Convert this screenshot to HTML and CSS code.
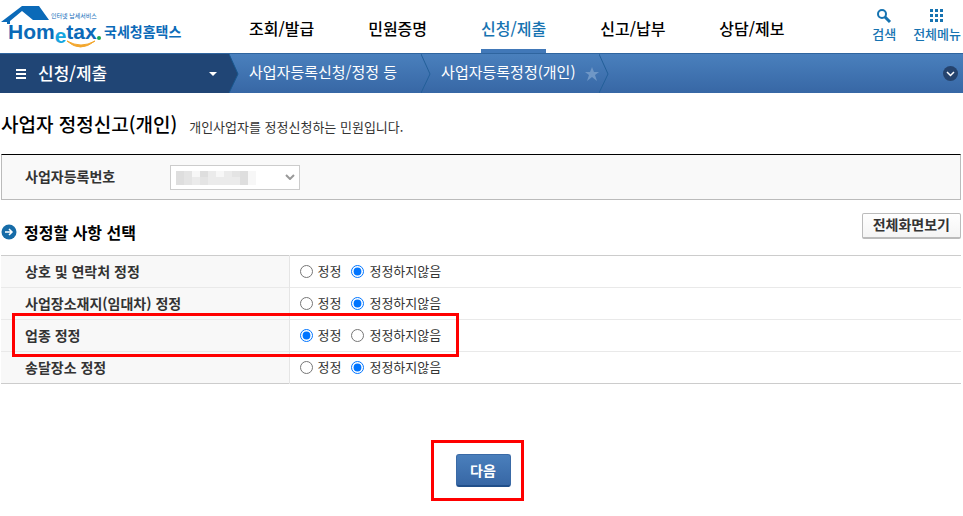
FILE: index.html
```html
<!DOCTYPE html>
<html lang="ko">
<head>
    <meta charset="utf-8">
    <meta name="viewport" content="width=device-width, initial-scale=1">
    <title>국세청홈택스</title>
    <link rel="stylesheet" href="styles.css">
</head>
<body>
    <header class="header">
        <a href="#" class="logo">
            <svg width="182" height="53" viewBox="0 0 182 53" role="img" aria-label="Hometax 국세청홈택스">
                <path d="M1 22L22 6H39L49 20H33L22 11L10 21V24H7V22Z" fill="#0b6ab8"/>
                <text class="logo-sub" x="51" y="18">인터넷 납세서비스</text>
                <text class="logo-name" x="8" y="39">Hom<tspan class="logo-e" dy="4">e</tspan><tspan dy="-4">tax</tspan></text>
                <path d="M67 41Q80 53 95 41Q81 49 67 41Z" fill="#f3a72e" stroke="#f3a72e"/>
                <circle cx="99" cy="38" r="2" fill="#19a551"/>
                <text class="logo-kr" x="104" y="37">국세청홈택스</text>
            </svg>
        </a>
        <nav class="menu">
            <a href="#">조회/발급</a>
            <a href="#">민원증명</a>
            <a href="#" class="active">신청/제출</a>
            <a href="#">신고/납부</a>
            <a href="#">상담/제보</a>
        </nav>
        <div class="tools">
            <a href="#">
                <svg width="16" height="16" viewBox="0 0 16 16"><circle cx="6" cy="6" r="4" fill="none" stroke="#1673b1" stroke-width="2"/><path d="M9 9L14 14" stroke="#1673b1" stroke-width="3"/></svg>
                검색
            </a>
            <a href="#">
                <svg width="16" height="16" viewBox="0 0 16 16" fill="#1673b1"><path d="M1 1h3v3H1zM6 1h3v3H6zM11 1h3v3h-3zM1 6h3v3H1zM6 6h3v3H6zM11 6h3v3h-3zM1 11h3v3H1zM6 11h3v3H6zM11 11h3v3h-3z"/></svg>
                전체메뉴
            </a>
        </div>
    </header>

    <div class="path-bar">
        <button type="button" class="path-main">
            <svg width="10" height="10" viewBox="0 0 10 10" fill="#fff"><path d="M0 0h10v2H0zM0 4h10v2H0zM0 8h10v2H0z"/></svg>
            <span>신청/제출</span>
            <svg width="8" height="4" viewBox="0 0 8 4"><path d="M0 0H8L4 4Z" fill="#fff"/></svg>
        </button>
        <svg width="10" height="39" viewBox="0 0 10 39"><path d="M0 0L9 20L0 39Z" fill="#204575"/><path d="M0 0L9 20L0 39" fill="none" stroke="#19578e"/></svg>
        <a href="#" class="path-sub">사업자등록신청/정정 등</a>
        <svg width="10" height="39" viewBox="0 0 10 39"><path d="M0 0L9 20L0 39" fill="none" stroke="#235f99"/></svg>
        <a href="#" class="path-page">사업자등록정정(개인)</a>
        <svg class="star" width="14" height="14" viewBox="0 0 14 14"><path d="M7 0L9 5L14 5L10 8L12 14L7 10L2 14L4 8L0 5L5 5Z" fill="#6f97c6"/></svg>
        <svg width="10" height="39" viewBox="0 0 10 39"><path d="M0 0L9 20L0 39" fill="none" stroke="#235f99"/></svg>
        <button type="button" class="path-open" aria-label="열기">
            <svg width="15" height="15" viewBox="0 0 15 15"><circle cx="7.500" cy="7.500" r="7.500" fill="#25436d"/><path d="M4 6L7.500 9.500L11 6" fill="none" stroke="#fff" stroke-width="1.500"/></svg>
        </button>
    </div>

    <main class="content">
        <div class="title">
            <h1>사업자 정정신고(개인)</h1>
            <p>개인사업자를 정정신청하는 민원입니다.</p>
        </div>

        <div class="search-box">
            <label for="bizNo">사업자등록번호</label>
            <div class="select-wrap">
                <select id="bizNo"><option></option></select>
                <svg class="masked" width="80" height="14" viewBox="0 0 80 14">
                    <path d="M0 0h80v14H0z" fill="#f7f7f7"/>
                    <path d="M0 0h8v14H0zM24 0h8v6h-8zM64 0h8v14h-8z" fill="#dedede"/>
                    <path d="M8 0h8v14H8zM24 6h8v8h-8zM56 0h8v6h-8z" fill="#e4e4e4"/>
                    <path d="M16 6h8v8h-8zM32 0h8v6h-8zM32 6h32v8H32zM48 0h8v6h-8z" fill="#ebebeb"/>
                </svg>
                <svg class="chevron" width="10" height="6" viewBox="0 0 10 6"><path d="M1 1L5 5L9 1" fill="none" stroke="#999" stroke-width="2"/></svg>
            </div>
        </div>

        <div class="section-head">
            <h2>
                <svg width="16" height="16" viewBox="0 0 16 16"><circle cx="8" cy="8" r="7.500" fill="#176ca8"/><path d="M4 8H11M8 5L11 8L8 11" fill="none" stroke="#fff" stroke-width="1.500"/></svg>
                정정할 사항 선택
            </h2>
            <button type="button" class="btn-view">전체화면보기</button>
        </div>

        <table class="form-table">
            <tr>
                <th scope="row">상호 및 연락처 정정</th>
                <td>
                    <div class="radios">
                        <label><input type="radio" name="name">정정</label>
                        <label><input type="radio" name="name" checked>정정하지않음</label>
                    </div>
                </td>
            </tr>
            <tr>
                <th scope="row">사업장소재지(임대차) 정정</th>
                <td>
                    <div class="radios">
                        <label><input type="radio" name="place">정정</label>
                        <label><input type="radio" name="place" checked>정정하지않음</label>
                    </div>
                </td>
            </tr>
            <tr>
                <th scope="row" class="marked">업종 정정<span class="mark mark-row"></span></th>
                <td>
                    <div class="radios">
                        <label><input type="radio" name="type" checked>정정</label>
                        <label><input type="radio" name="type">정정하지않음</label>
                    </div>
                </td>
            </tr>
            <tr>
                <th scope="row">송달장소 정정</th>
                <td>
                    <div class="radios">
                        <label><input type="radio" name="delivery">정정</label>
                        <label><input type="radio" name="delivery" checked>정정하지않음</label>
                    </div>
                </td>
            </tr>
        </table>

        <div class="actions">
            <div class="marked">
                <button type="button" class="btn-next">다음</button>
                <span class="mark mark-next"></span>
            </div>
        </div>
    </main>
</body>
</html>
```
FILE: styles.css
```css
* {
    box-sizing: border-box;
}
body {
    margin: 0;
    background: #fff;
    color: #333;
    font-family: "Noto Sans CJK KR", sans-serif;
    font-size: 13px;
    line-height: 20px;
}
a {
    color: inherit;
    text-decoration: none;
}
svg {
    display: block;
    flex: none;
}
button {
    font-family: inherit;
    cursor: pointer;
}

/* header */
.header {
    display: flex;
    height: 53px;
}
.logo-sub {
    font-size: 6px;
    fill: #0b6ab8;
}
.logo-name {
    font-family: "Liberation Sans", sans-serif;
    font-size: 21px;
    font-weight: 700;
    fill: #0b6ab8;
}
.logo-e {
    fill: #16a6e0;
}
.logo-kr {
    font-size: 14px;
    font-weight: 700;
    fill: #0b6ab8;
}
.menu {
    display: flex;
    gap: 54px;
    margin-left: 67px;
    color: #000;
    font-size: 16px;
    font-weight: 500;
}
.menu a {
    padding-top: 18px;
    border-bottom: 4px solid transparent;
    white-space: nowrap;
}
.menu .active {
    color: #1673b1;
    border-color: #4178b8;
}
.tools {
    display: flex;
    gap: 17px;
    margin-left: auto;
    padding: 8px 2px 0 0;
    color: #1673b1;
    font-weight: 500;
}
.tools a {
    display: flex;
    flex-direction: column;
    align-items: center;
    white-space: nowrap;
}

/* path bar */
.path-bar {
    display: flex;
    align-items: center;
    height: 40px;
    background: linear-gradient(#4a80bd, #3767a5);
    border-top: 1px solid #2f659f;
    color: #fff;
    font-size: 15px;
    white-space: nowrap;
}
.path-bar a {
    padding-bottom: 3px;
}
.path-main {
    display: flex;
    align-items: center;
    width: 229px;
    height: 39px;
    padding: 0 12px 0 16px;
    border: 0;
    background: #204575;
    color: #fff;
    font-size: 17px;
    font-weight: 500;
}
.path-main span {
    margin: 0 auto 0 12px;
    padding-bottom: 2px;
}
.path-sub {
    margin: 0 24px 0 10px;
}
.path-page {
    margin-left: 10px;
}
.star {
    margin-left: 10px;
}
.path-open {
    margin-left: auto;
    padding: 0 5px;
    border: 0;
    background: none;
}

/* content */
.content {
    padding: 19px 2px 29px 1px;
}
.title {
    display: flex;
    align-items: baseline;
    gap: 12px;
}
.title h1 {
    margin: 0;
    color: #000;
    font-size: 19px;
    font-weight: 500;
    line-height: 24px;
}
.title p {
    margin: 0;
}
.search-box {
    display: flex;
    align-items: center;
    height: 46px;
    margin-top: 17px;
    padding-left: 23px;
    background: #f9f9f9;
    border: 1px solid #bbb;
    border-top-color: #000;
    font-size: 14px;
    font-weight: 700;
}
.search-box label {
    width: 145px;
    padding-bottom: 2px;
}
.select-wrap {
    position: relative;
}
.select-wrap select {
    display: block;
    width: 130px;
    height: 25px;
    appearance: none;
    background: #fff;
    border: 1px solid #ccc;
    border-radius: 0;
}
.masked {
    position: absolute;
    top: 6px;
    left: 6px;
    pointer-events: none;
}
.chevron {
    position: absolute;
    top: 9px;
    right: 5px;
    pointer-events: none;
}
.section-head {
    display: flex;
    justify-content: space-between;
    margin-top: 13px;
}
.section-head h2 {
    display: flex;
    align-items: center;
    gap: 7px;
    margin: 7px 0 11px;
    color: #000;
    font-size: 16px;
    font-weight: 700;
    line-height: 24px;
}
.btn-view {
    height: 26px;
    padding: 0 10px 3px;
    background: linear-gradient(#fff, #f4f4f4);
    border: 1px solid #bbb;
    border-bottom-width: 2px;
    border-radius: 2px;
    color: #333;
    font-size: 14px;
    font-weight: 700;
    line-height: 20px;
}

/* table */
.form-table {
    width: 100%;
    border-collapse: collapse;
    border-top: 1px solid #ccc;
    border-bottom: 1px solid #ccc;
}
.form-table th,
.form-table td {
    height: 32px;
    padding: 0 0 2px;
    border-top: 1px solid #e9e9e9;
}
.form-table tr:first-child th,
.form-table tr:first-child td {
    border-top-color: #ccc;
}
.form-table th {
    width: 288px;
    padding-left: 24px;
    background: #f8f8f8;
    border-right: 1px solid #e5e5e5;
    font-size: 14px;
    text-align: left;
}
.radios {
    display: flex;
    gap: 10px;
    padding-left: 10px;
}
.radios label {
    display: flex;
    align-items: center;
    gap: 5px;
}
.radios input {
    width: 13px;
    height: 13px;
    margin: 2px 0 0;
    accent-color: #0075ff;
}

/* highlighted areas */
.marked {
    position: relative;
}
.mark {
    position: absolute;
    z-index: 1;
    border: 3px solid #f00;
    pointer-events: none;
}
.mark-row {
    top: -7px;
    left: 11px;
    width: 447px;
    height: 44px;
}
.mark-next {
    inset: -14px -13px -14px -25px;
}

.actions {
    display: flex;
    justify-content: center;
    margin-top: 70px;
    padding-left: 4px;
}
.btn-next {
    display: block;
    width: 55px;
    height: 33px;
    background: linear-gradient(#4a7fbc, #3767a5);
    border: 1px solid #3a6aa6;
    border-bottom: 2px solid #204f8a;
    border-radius: 3px;
    color: #fff;
    font-size: 14px;
    font-weight: 700;
    line-height: 20px;
}
```
